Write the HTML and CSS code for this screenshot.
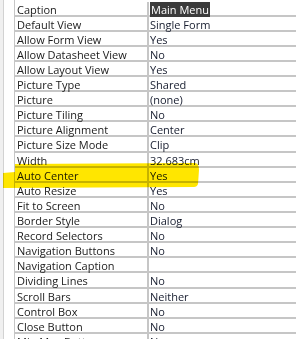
FILE: index.html
```html
<!DOCTYPE html>
<html lang="en">
<head>
  <meta charset="utf-8">
  <title>Property Sheet</title>
  <link rel="stylesheet" href="styles.css">
</head>
<body>
  <div class="sheet">
    <div class="gutter"></div>
    <div class="props">
      <div class="row"><div class="name">Caption</div><div class="value"><span class="selected">Main Menu</span></div></div>
      <div class="row"><div class="name">Default View</div><div class="value">Single Form</div></div>
      <div class="row"><div class="name">Allow Form View</div><div class="value">Yes</div></div>
      <div class="row"><div class="name">Allow Datasheet View</div><div class="value">No</div></div>
      <div class="row"><div class="name">Allow Layout View</div><div class="value">Yes</div></div>
      <div class="row"><div class="name">Picture Type</div><div class="value">Shared</div></div>
      <div class="row"><div class="name">Picture</div><div class="value">(none)</div></div>
      <div class="row"><div class="name">Picture Tiling</div><div class="value">No</div></div>
      <div class="row"><div class="name">Picture Alignment</div><div class="value">Center</div></div>
      <div class="row"><div class="name">Picture Size Mode</div><div class="value">Clip</div></div>
      <div class="row"><div class="name">Width</div><div class="value">32.683cm</div></div>
      <div class="row"><div class="name">Auto Center</div><div class="value">Yes</div></div>
      <div class="row"><div class="name">Auto Resize</div><div class="value">Yes</div></div>
      <div class="row"><div class="name">Fit to Screen</div><div class="value">No</div></div>
      <div class="row"><div class="name">Border Style</div><div class="value">Dialog</div></div>
      <div class="row"><div class="name">Record Selectors</div><div class="value">No</div></div>
      <div class="row"><div class="name">Navigation Buttons</div><div class="value">No</div></div>
      <div class="row"><div class="name">Navigation Caption</div><div class="value"></div></div>
      <div class="row"><div class="name">Dividing Lines</div><div class="value">No</div></div>
      <div class="row"><div class="name">Scroll Bars</div><div class="value">Neither</div></div>
      <div class="row"><div class="name">Control Box</div><div class="value">No</div></div>
      <div class="row"><div class="name">Close Button</div><div class="value">No</div></div>
      <div class="row"><div class="name">Min Max Buttons</div><div class="value">None</div></div>
    </div>
  </div>

  <!-- highlighter stroke over the Auto Center row -->
  <svg class="marker" width="296" height="339" viewBox="0 0 296 339">
    <path d="M15 164 L195 163 Q199 163 199 170 L198 184 Q197 187 194 187 L3 188 L3 173 L15 172 Z" fill="#ffe600"/>
  </svg>
</body>
</html>
```

FILE: styles.css
```css
:root {
  --line-color: #c6c6c6;
  --name-color: #1a1a1a;
  --value-color: #161c2e;
}

* {
  margin: 0;
  padding: 0;
  box-sizing: border-box;
}

body {
  width: 296px;
  height: 339px;
  overflow: hidden;
  position: relative;
  background-color: #f0f0f0;
  font-family: 'Open Sans', 'Liberation Sans', sans-serif;
  font-size: 11px;
}

.sheet {
  display: flex;
  height: 100%;
  margin-left: 3px;
  background-color: #ffffff;
  border-left: 1px solid #d2d2d2;
}

.gutter {
  width: 11px;
  flex-shrink: 0;
  border-right: 1px solid var(--line-color);
}

.props {
  flex: 1;
  padding-top: 1.5px;
}

.row {
  display: grid;
  grid-template-columns: 134px 1fr;
  height: 15.12px;
  border-bottom: 2px solid var(--line-color);
}

.name,
.value {
  padding-top: 3px;
  line-height: 10.12px;
  white-space: nowrap;
}

.name {
  padding-left: 2px;
  color: var(--name-color);
  border-right: 2px solid var(--line-color);
}

.value {
  padding-left: 1px;
  color: var(--value-color);
}

.selected {
  display: inline-block;
  margin-top: -3px;
  padding: 3px 1px 2px 1px;
  background-color: #3b3b3b;
  color: #ffffff;
}

.marker {
  position: absolute;
  left: 0;
  top: 0;
  pointer-events: none;
  mix-blend-mode: multiply;
}
```
